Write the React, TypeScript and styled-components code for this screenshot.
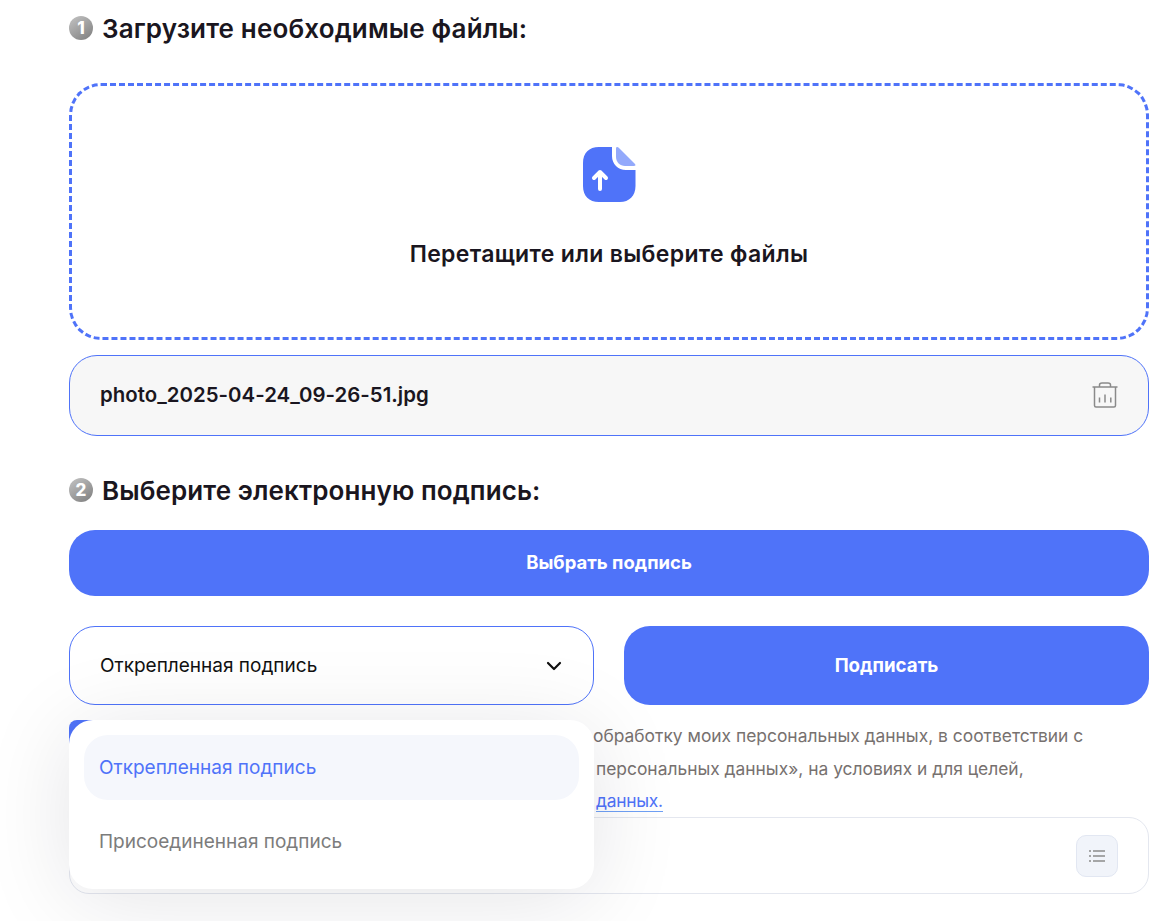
import styled, { createGlobalStyle } from "styled-components";
import { ChevronDown } from "lucide-react";

const GlobalStyle = createGlobalStyle`
  html, body {
    margin: 0;
    padding: 0;
    background: #fff;
    overflow: hidden;
  }
  * {
    box-sizing: border-box;
  }
`;

const Page = styled.div`
  width: 1171px;
  height: 921px;
  padding: 13px 22px 0 69px;
  font-family: Inter, "Noto Sans", sans-serif;
  color: #1a1620;
  overflow: hidden;
`;

const StepTitle = styled.h2`
  display: flex;
  align-items: center;
  gap: 9px;
  margin: 0;
  height: 30px;
  font-size: 26px;
  font-weight: 600;
  letter-spacing: 0.15px;
  color: #1a1620;
`;

const StepNumber = styled.span`
  width: 24px;
  height: 24px;
  flex: none;
  border-radius: 50%;
  background: linear-gradient(145deg, #c4c4c4, #7d7d7d);
  color: #fff;
  font-size: 17px;
  font-weight: 800;
  display: flex;
  align-items: center;
  justify-content: center;
`;

const DropZone = styled.div`
  margin-top: 40px;
  height: 257px;
  border: 3px dashed #4f73f9;
  border-radius: 32px;
  display: flex;
  flex-direction: column;
  align-items: center;
  padding-top: 61px;
`;

const DropText = styled.div`
  margin-top: 38px;
  font-size: 23px;
  font-weight: 600;
  line-height: 28px;
  letter-spacing: 0.33px;
`;

const FileRow = styled.div`
  margin-top: 15px;
  height: 81px;
  border: 1px solid #4f73f9;
  border-radius: 28px;
  background: #f7f7f7;
  display: flex;
  align-items: center;
  justify-content: space-between;
  padding: 0 30px 2px;
`;

const FileName = styled.span`
  font-size: 20.4px;
  font-weight: 600;
  letter-spacing: 0.03px;
`;

const SecondTitle = styled(StepTitle)`
  margin-top: 39px;
  letter-spacing: 0.1px;
`;

const PrimaryButton = styled.button<{ $height: number; $size: number }>`
  width: 100%;
  height: ${(p) => p.$height}px;
  border: none;
  border-radius: 26px;
  background: #4f73f9;
  color: #fff;
  font-family: inherit;
  font-size: ${(p) => p.$size}px;
  font-weight: 700;
`;

const WideButton = styled(PrimaryButton)`
  padding-bottom: 3px;
`;

const WideAction = styled.div`
  margin-top: 25px;
`;

const ActionRow = styled.div`
  margin-top: 30px;
  display: grid;
  grid-template-columns: 1fr 1fr;
  gap: 30px;
`;

const SelectWrap = styled.div`
  position: relative;
`;

const SelectBox = styled.div`
  height: 79px;
  border: 1px solid #4f73f9;
  border-radius: 26px;
  display: flex;
  align-items: center;
  justify-content: space-between;
  padding: 0 27px 0 30px;
  font-size: 19px;
  color: #111;
`;

const Menu = styled.div`
  position: absolute;
  z-index: 2;
  left: 0;
  right: 0;
  top: 94px;
  height: 169px;
  padding: 15px;
  background: #fff;
  border-radius: 24px;
  box-shadow: 0 10px 90px rgba(20, 20, 40, 0.11);
`;

const MenuItem = styled.div<{ $active?: boolean }>`
  height: ${(p) => (p.$active ? 65 : 82)}px;
  padding-left: 15px;
  border-radius: 24px;
  display: flex;
  align-items: center;
  font-size: 19px;
  color: ${(p) => (p.$active ? "#4f73f9" : "#7c7c7c")};
  background: ${(p) => (p.$active ? "#f5f7fc" : "transparent")};
`;

const Consent = styled.div`
  position: relative;
  margin-top: 15px;
  padding-left: 49px;
  font-size: 17.4px;
  line-height: 32.5px;
  color: #77716f;
  white-space: nowrap;
`;

const Check = styled.span`
  position: absolute;
  left: 0;
  top: 0;
  width: 30px;
  height: 30px;
  border-radius: 8px;
  background: #4f73f9;
`;

const PolicyLink = styled.a`
  color: #4f73f9;
  letter-spacing: -0.25px;
  border-bottom: 1px solid #6fa0f5;
`;

const HiddenLead = styled.span<{ $width: number }>`
  display: inline-block;
  width: ${(p) => p.$width}px;
  overflow: hidden;
  vertical-align: bottom;
`;

const ResultBox = styled.div`
  margin-top: -0.5px;
  height: 77px;
  border: 1px solid #e4e7ef;
  border-radius: 20px;
  display: flex;
  align-items: center;
  justify-content: flex-end;
  padding-right: 30px;
`;

const ListButton = styled.div`
  width: 42px;
  height: 42px;
  border: 1px solid #e2e7f2;
  border-radius: 10px;
  background: #f1f4fa;
  display: flex;
  align-items: center;
  justify-content: center;
`;

function UploadIcon() {
  return (
    <svg width="53" height="55" viewBox="0 0 53 55" fill="none">
      <path
        d="M16 0H29V9C29 17 35 23 43 23H52.5V39C52.5 49 46 55 37 55H16C6 55 0 49 0 39V16C0 6 6 0 16 0Z"
        fill="#4f73f9"
      />
      <path
        d="M33 1.5C33 0 34.5 -0.5 36 1L51.5 16.5C53 18 52.5 19 51 19H42C37 19 33 15 33 10V1.5Z"
        fill="#93a9fb"
      />
      <path
        d="M17 42V25M11 31L17 25L23 31"
        stroke="#fff"
        strokeWidth="4"
        strokeLinecap="round"
        strokeLinejoin="round"
      />
    </svg>
  );
}

function TrashIcon() {
  return (
    <svg width="26" height="26" viewBox="0 0 26 26" fill="none" stroke="#8a8a8a" strokeWidth="1.5">
      <path d="M0.5 5H25.5" />
      <path d="M7.5 5V3C7.5 1.5 8.5 1 10 1H16C17.5 1 18.5 1.5 18.5 3V5" />
      <path d="M2.5 5V23.5C2.5 24.5 3 25 4 25H22C23 25 23.5 24.5 23.5 23.5V5" />
      <path d="M7.5 15.5V20.5M13 12.5V20.5M18.8 15.5V20.5" />
    </svg>
  );
}

function ListIcon() {
  return (
    <svg width="16" height="12" viewBox="0 0 16 12" fill="none" stroke="#8c8c8c" strokeWidth="1.6">
      <path d="M0 1H2M4 1H16M0 6H2M4 6H16M0 11H2M4 11H16" />
    </svg>
  );
}

export default function App() {
  return (
    <Page>
      <GlobalStyle />
      <StepTitle>
        <StepNumber>1</StepNumber>
        Загрузите необходимые файлы:
      </StepTitle>
      <DropZone>
        <UploadIcon />
        <DropText>Перетащите или выберите файлы</DropText>
      </DropZone>
      <FileRow>
        <FileName>photo_2025-04-24_09-26-51.jpg</FileName>
        <TrashIcon />
      </FileRow>
      <SecondTitle>
        <StepNumber>2</StepNumber>
        Выберите электронную подпись:
      </SecondTitle>
      <WideAction>
        <WideButton $height={66} $size={18.5}>Выбрать подпись</WideButton>
      </WideAction>
      <ActionRow>
        <SelectWrap>
          <SelectBox>
            Открепленная подпись
            <ChevronDown size={24} color="#111" strokeWidth={2.2} />
          </SelectBox>
          <Menu>
            <MenuItem $active>Открепленная подпись</MenuItem>
            <MenuItem>Присоединенная подпись</MenuItem>
          </Menu>
        </SelectWrap>
        <PrimaryButton $height={79} $size={18.7}>Подписать</PrimaryButton>
      </ActionRow>
      <Consent>
        <Check />
        <HiddenLead $width={475}>Я даю согласие на</HiddenLead>обработку моих персональных данных, в соответствии с
        <br />
        <HiddenLead $width={478}>Федеральным законом «О</HiddenLead>персональных данных», на условиях и для целей,
        <br />
        <HiddenLead $width={478}>определенных в Политике</HiddenLead>
        <PolicyLink>данных.</PolicyLink>
      </Consent>
      <ResultBox>
        <ListButton>
          <ListIcon />
        </ListButton>
      </ResultBox>
    </Page>
  );
}
